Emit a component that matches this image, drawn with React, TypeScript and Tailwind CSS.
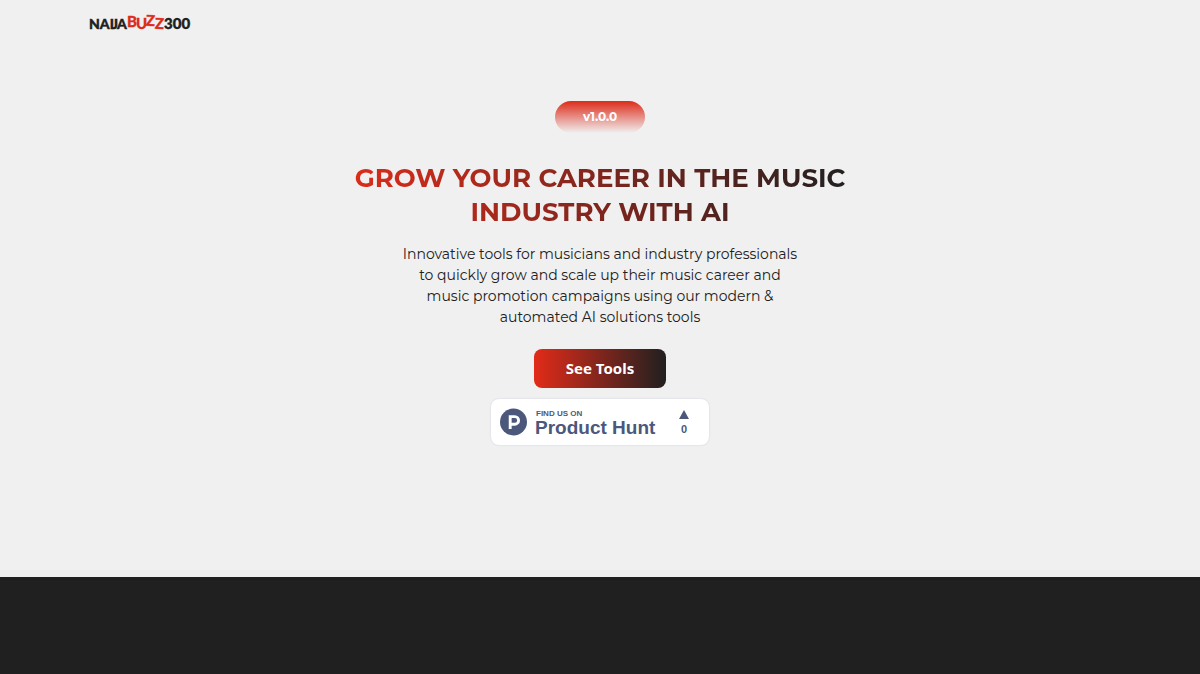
import React from 'react';

const Logo = () => {
  return <svg width="108" height="32" viewBox="0 0 108 32" role="img" aria-label="NaijaBuzz300" className="font-[Lato,sans-serif] font-black">
      <g fill="#202020" stroke="#202020" strokeWidth="0.4">
        <text x="1" y="21" fontSize="14">NAI</text>
        <text x="24" y="21" fontSize="14">J</text>
        <text x="29" y="21" fontSize="14">A</text>
        <text x="76" y="21" fontSize="15">300</text>
      </g>
      <g fill="#dd2c1a" stroke="#dd2c1a" strokeWidth="0.3" fontSize="15">
        <text x="39" y="19">B</text>
        <text x="48" y="21">U</text>
        <text x="58" y="18" transform="rotate(2 62 13)">Z</text>
        <text x="67" y="21" transform="rotate(2 71 17)">Z</text>
      </g>
    </svg>;
};

const ProductHuntBadge = () => {
  return <a href="#product-hunt" className="mt-[11px] flex h-[46px] w-[218px] items-center rounded-lg bg-white px-2 font-['Liberation_Sans',sans-serif] font-bold text-[#4b587c] shadow-[0_0_2px_#c8cfe0]">
      <svg width="28" height="28" viewBox="0 0 28 28" aria-hidden="true">
        <circle cx="14.5" cy="14" r="13.5" fill="#4b587c" />
        <path d="M11.2 21V8.6h4.6a3.8 3.8 0 0 1 0 7.6h-4.6" fill="none" stroke="#fff" strokeWidth="2.9" />
      </svg>
      <span className="ml-2 flex flex-col items-start pt-1 text-left">
        <span className="pl-px text-[8px] leading-[8px]">FIND US ON</span>
        <span className="text-[19px] leading-5">Product Hunt</span>
      </span>
      <span className="mr-[7px] ml-auto flex w-5 flex-col items-center gap-1">
        <svg width="10" height="9" viewBox="0 0 10 9" aria-hidden="true">
          <path d="M5 0l5 9H0z" fill="#4b587c" />
        </svg>
        <span className="text-[11px] leading-3">0</span>
      </span>
    </a>;
};

export default function App() {
  return <div className="min-h-screen bg-[#202020] font-[Montserrat,Inter,sans-serif] text-[#202020]">
      <div className="bg-[#f0f0f0] pb-[132px]">
        {/* Header */}
        <header className="flex h-12 items-center px-[88px]">
          <a href="#home"><Logo /></a>
        </header>
        {/* Hero */}
        <main className="flex flex-col items-center px-4 pt-[53px] text-center">
          <span className="rounded-full bg-linear-to-b/srgb from-[#dd2c1a] to-[#f0f0f0] px-7 py-2 text-xs font-bold text-white">
            v1.0.0
          </span>
          <h1 className="mt-7 max-w-[500px] bg-linear-to-r/srgb from-[#dd2c1a] to-[#202020] bg-clip-text text-[26px] leading-[34px] font-bold text-transparent">
            GROW YOUR CAREER IN THE MUSIC INDUSTRY WITH AI
          </h1>
          <p className="mt-[15px] max-w-[400px] text-sm leading-[21px]">
            Innovative tools for musicians and industry professionals to quickly grow and scale up their music career and music promotion campaigns using our modern & automated AI solutions tools
          </p>
          <button type="button" className="mt-[21px] h-[39px] w-[132px] rounded-lg bg-linear-to-r/srgb from-[#e22b18] to-[#202020] pb-0.5 font-['Noto_Sans',sans-serif] text-[15px] leading-5 font-bold text-white">
            See Tools
          </button>
          <ProductHuntBadge />
        </main>
      </div>
    </div>;
}
